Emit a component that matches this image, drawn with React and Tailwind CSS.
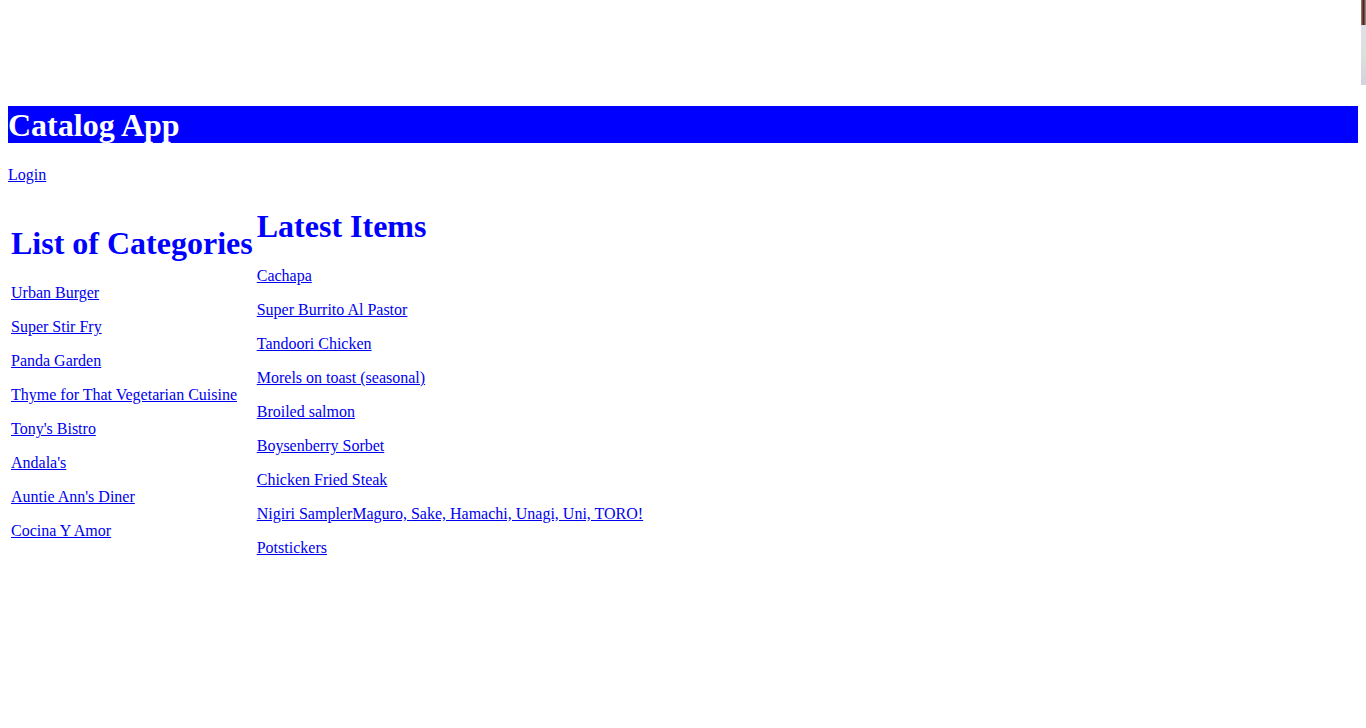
const categories = [
  'Urban Burger',
  'Super Stir Fry',
  'Panda Garden',
  'Thyme for That Vegetarian Cuisine',
  "Tony's Bistro",
  "Andala's",
  "Auntie Ann's Diner",
  'Cocina Y Amor',
]

const latestItems = [
  'Cachapa',
  'Super Burrito Al Pastor',
  'Tandoori Chicken',
  'Morels on toast (seasonal)',
  'Broiled salmon',
  'Boysenberry Sorbet',
  'Chicken Fried Steak',
  'Nigiri SamplerMaguro, Sake, Hamachi, Unagi, Uni, TORO!',
  'Potstickers',
]

function LinkList({ items }) {
  return (
    <div className="mt-[22px] flex flex-col gap-4">
      {items.map((name) => (
        <a key={name} href="#" className="block text-[16px] leading-[18px] text-[#0000ee] underline">
          {name}
        </a>
      ))}
    </div>
  )
}

export default function App() {
  return (
    <div className="min-h-[728px] bg-white px-2 text-black" style={{ fontFamily: "'Liberation Serif', 'Times New Roman', serif" }}>
      {/* top strip with clipped picture */}
      <div className="-mr-2 flex h-[85px] justify-end">
        <div className="flex w-[5px] flex-col">
          <div className="h-[25px] bg-gradient-to-r from-[#8a8a8a] via-[#5a1a14] to-[#9a9a9a]" />
          <div className="flex-1 bg-gradient-to-b from-[#e4dde8] via-[#d9e2dc] to-[#d6d0e0]" />
        </div>
      </div>

      <h1 className="mt-[21px] bg-[#0000ff] pt-[2px] text-[32px] leading-[35px] font-bold text-white">Catalog App</h1>

      <div className="mt-[23px] text-[16px] leading-[18px]">
        <a href="#" className="text-[#0000ee] underline">Login</a>
      </div>

      {/* two columns, left centred against the right */}
      <div className="flex items-center gap-[2px] py-[2px] pl-[2px]">
        <div className="p-px">
          <h1 className="mt-[21px] text-[32px] leading-[37px] font-bold text-[#0000ff]">List of Categories</h1>
          <LinkList items={categories} />
          <div className="h-4" />
        </div>
        <div className="p-px">
          <h1 className="mt-[21px] text-[32px] leading-[37px] font-bold text-[#0000ff]">Latest Items</h1>
          <LinkList items={latestItems} />
          <div className="h-4" />
        </div>
      </div>
    </div>
  )
}
